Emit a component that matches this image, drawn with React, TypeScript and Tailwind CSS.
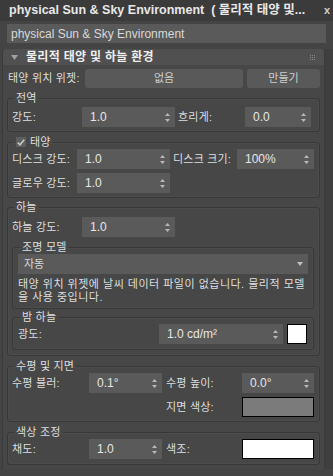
import React from "react";

const FONT = "font-['Liberation_Sans','Noto_Sans_CJK_KR',sans-serif]";

function SpinArrows() {
    return (
        <svg width="5" height="9" viewBox="0 0 5 9" className="shrink-0">
            <path d="M2.5 0 L5 3 L0 3 Z" fill="#b8b8b8" />
            <path d="M0 6 L5 6 L2.5 9 Z" fill="#b8b8b8" />
        </svg>
    );
}

function Spinner({ value, className = "" }: { value: string; className?: string }) {
    return (
        <div
            className={`h-[20px] bg-[#5a5a5a] flex items-center justify-between pl-[8px] pr-[5px] text-[12px] text-[#e6e6e6] shrink-0 ${className}`}
        >
            <span>{value}</span>
            <SpinArrows />
        </div>
    );
}

function Swatch({ color, className = "" }: { color: string; className?: string }) {
    return <div className={`h-[20px] border border-black shrink-0 ${color} ${className}`} />;
}

function Label({ text, className = "" }: { text: string; className?: string }) {
    return (
        <span className={`text-[11px] tracking-[0.2px] text-[#dedede] whitespace-nowrap shrink-0 ${className}`}>
            {text}
        </span>
    );
}

function Group({
    title,
    children,
    className = "",
    check = false,
}: {
    title: string;
    children: React.ReactNode;
    className?: string;
    check?: boolean;
}) {
    return (
        <fieldset className={`border border-[#383838] rounded-[3px] shadow-[inset_0_0_0_1px_#4c4c4c] ${className}`}>
            <legend className="ml-[2px] px-[2px] h-[14px] flex items-center gap-[4px] text-[11px] leading-[14px] tracking-[0.2px] text-[#dedede]">
                {check && (
                    <span className="w-[10px] h-[10px] bg-[#5e5e5e] flex items-center justify-center">
                        <svg width="8" height="7" viewBox="0 0 8 7">
                            <path d="M0.8 3.6 L3 5.8 L7.2 0.8" stroke="#c8c8c8" strokeWidth="1.6" fill="none" />
                        </svg>
                    </span>
                )}
                <span>{title}</span>
            </legend>
            {children}
        </fieldset>
    );
}

export default function App() {
    return (
        <div className={`w-[333px] h-[476px] bg-[#444444] overflow-hidden ${FONT}`}>
            <div className="h-[21px] bg-[#3b3b3b] flex items-center pl-[9px] pr-[3px] text-[#e8e8e8]">
                <span className="flex-1 text-[12.5px] font-bold whitespace-nowrap overflow-hidden">
                    physical Sun &amp; Sky Environment&nbsp; ( 물리적 태양 및...
                </span>
                <span className="text-[11px] font-bold text-[#d0d0d0] pl-[2px]">x</span>
            </div>

            <div className="mx-[7px] mt-[3px] h-[19px] bg-[#5a5a5a] flex items-center px-[4px] text-[12px] text-[#d8d8d8]">
                physical Sun &amp; Sky Environment
            </div>

            <div className="flex mt-[6px]">
                <div className="ml-[2px] w-[323px] h-[420px] border-l border-r border-[#3a3a3a] rounded-t-[3px] bg-[#474747]">
                    <div className="h-[16px] bg-[#505050] rounded-t-[3px] flex items-center pl-[8px] pr-[9px]">
                        <svg width="7" height="5" viewBox="0 0 7 5">
                            <path d="M0 0 L7 0 L3.5 5 Z" fill="#a0a0a0" />
                        </svg>
                        <span className="ml-[8px] flex-1 text-[12px] font-bold tracking-[0.3px] text-[#eeeeee]">
                            물리적 태양 및 하늘 환경
                        </span>
                        <div className="grid grid-cols-3 gap-[1px]">
                            {Array.from({ length: 9 }).map((_, i) => (
                                <span key={i} className="w-[1px] h-[1px] bg-[#8a8a8a]" />
                            ))}
                        </div>
                    </div>

                    <div className="px-[4px]">
                        <div className="mt-[4px] flex items-center h-[19px]">
                            <Label text="태양 위치 위젯:" className="w-[78px] pl-[1px]" />
                            <div className="w-[158px] h-[19px] rounded-[3px] bg-[#595959] flex items-center justify-center text-[11px] text-[#cfcfcf]">
                                없음
                            </div>
                            <div className="ml-[4px] w-[73px] h-[19px] rounded-[3px] bg-[#595959] flex items-center justify-center text-[11px] text-[#cfcfcf]">
                                만들기
                            </div>
                        </div>

                        <Group title="전역" className="mt-[3px] px-[4px] pt-[2px] pb-[4px]">
                            <div className="flex items-center">
                                <Label text="강도:" className="w-[70px]" />
                                <Spinner value="1.0" className="w-[93px]" />
                                <Label text="흐리게:" className="ml-[3px] w-[67px]" />
                                <Spinner value="0.0" className="w-[66px]" />
                            </div>
                        </Group>

                        <Group title="태양" check className="mt-[3px] px-[4px] pb-[4px]">
                            <div className="flex items-center">
                                <Label text="디스크 강도:" className="w-[65px]" />
                                <Spinner value="1.0" className="w-[93px]" />
                                <Label text="디스크 크기:" className="ml-[3px] w-[64px]" />
                                <Spinner value="100%" className="w-[77px]" />
                            </div>
                            <div className="flex items-center mt-[4px]">
                                <Label text="글로우 강도:" className="w-[65px]" />
                                <Spinner value="1.0" className="w-[93px]" />
                            </div>
                        </Group>

                        <Group title="하늘" className="mt-[2px] px-[4px] pt-[3px] pb-[5px]">
                            <div className="flex items-center">
                                <Label text="하늘 강도:" className="w-[70px]" />
                                <Spinner value="1.0" className="w-[93px]" />
                            </div>

                            <Group title="조명 모델" className="mt-[3px] mr-[1px] px-[5px] pb-[4px]">
                                <div className="h-[20px] bg-[#5a5a5a] flex items-center justify-between pl-[6px] pr-[5px] text-[11px] text-[#d8d8d8]">
                                    <span>자동</span>
                                    <svg width="6" height="4" viewBox="0 0 6 4">
                                        <path d="M0 0 L6 0 L3 4 Z" fill="#c0c0c0" />
                                    </svg>
                                </div>
                                <p className="mt-[4px] text-[11px] leading-[13px] tracking-[0.5px] break-all text-[#dedede]">
                                    태양 위치 위젯에 날씨 데이터 파일이 없습니다. 물리적 모델을 사용 중입니다.
                                </p>
                            </Group>

                            <Group title="밤 하늘" className="mt-[1px] mr-[1px] px-[5px] pb-[5px]">
                                <div className="flex items-center">
                                    <Label text="광도:" className="w-[141px]" />
                                    <Spinner value="1.0 cd/m²" className="w-[124px]" />
                                    <Swatch color="bg-white" className="ml-[4px] w-[20px]" />
                                </div>
                            </Group>
                        </Group>

                        <Group title="수평 및 지면" className="mt-[3px] px-[4px] pb-[4px]">
                            <div className="flex items-center">
                                <Label text="수평 블러:" className="w-[77px]" />
                                <Spinner value="0.1°" className="w-[73px]" />
                                <Label text="수평 높이:" className="ml-[4px] w-[76px]" />
                                <Spinner value="0.0°" className="w-[72px]" />
                            </div>
                            <div className="flex items-center mt-[4px]">
                                <Label text="지면 색상:" className="ml-[154px] w-[76px]" />
                                <Swatch color="bg-[#7b7b7b]" className="w-[72px]" />
                            </div>
                        </Group>

                        <Group title="색상 조정" className="mt-[3px] px-[4px] pb-[5px]">
                            <div className="flex items-center">
                                <Label text="채도:" className="w-[77px]" />
                                <Spinner value="1.0" className="w-[73px]" />
                                <Label text="색조:" className="ml-[4px] w-[76px]" />
                                <Swatch color="bg-white" className="w-[72px]" />
                            </div>
                        </Group>
                    </div>
                </div>
                <div className="flex-1 bg-[#3f3f3f]" />
            </div>
        </div>
    );
}
